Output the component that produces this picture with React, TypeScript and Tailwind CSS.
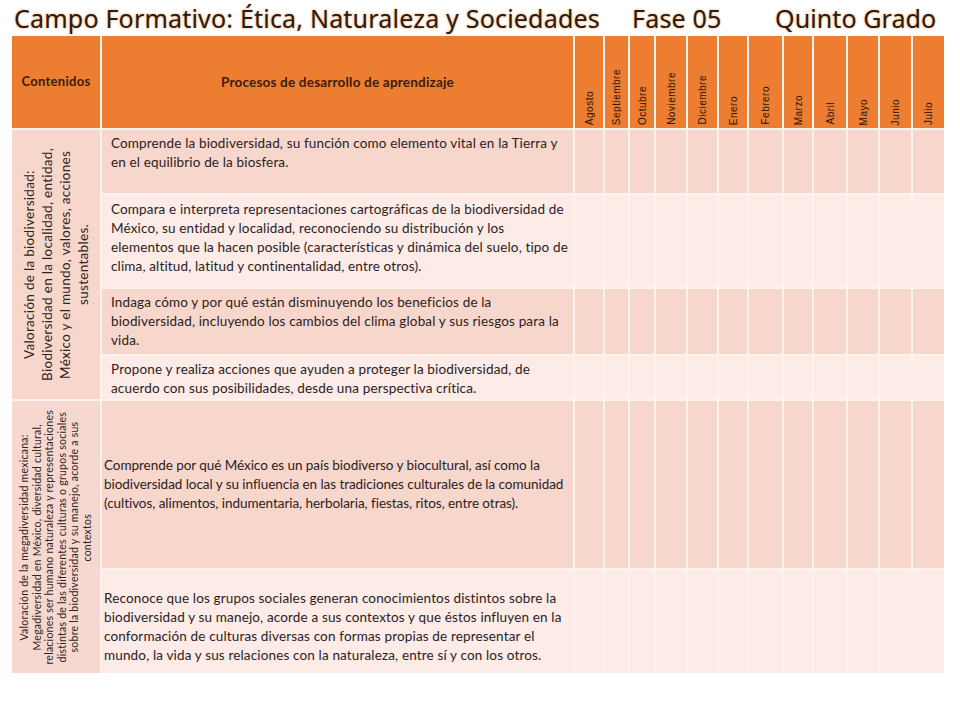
const months = [
  "Agosto",
  "Septiembre",
  "Octubre",
  "Noviembre",
  "Diciembre",
  "Enero",
  "Febrero",
  "Marzo",
  "Abril",
  "Mayo",
  "Junio",
  "Julio",
];

type Row = { lines: string[]; dark: boolean; align: "top" | "center"; pad: string; track: string };

const rows: Row[] = [
  {
    dark: true,
    align: "top",
    pad: "pl-[9px] pt-[4px]",
    track: "tracking-[0.15px]",
    lines: [
      "Comprende la biodiversidad, su función como elemento vital en la Tierra y",
      "en el equilibrio de la biosfera.",
    ],
  },
  {
    dark: false,
    align: "top",
    pad: "pl-[9px] pt-[5px]",
    track: "tracking-[0.15px]",
    lines: [
      "Compara e interpreta representaciones cartográficas de la biodiversidad de",
      "México, su entidad y localidad, reconociendo su distribución y los",
      "elementos que la hacen posible (características y dinámica del suelo, tipo de",
      "clima, altitud, latitud y continentalidad, entre otros).",
    ],
  },
  {
    dark: true,
    align: "top",
    pad: "pl-[9px] pt-[4px]",
    track: "tracking-[0.15px]",
    lines: [
      "Indaga cómo y por qué están disminuyendo los beneficios de la",
      "biodiversidad, incluyendo los cambios del clima global y sus riesgos para la",
      "vida.",
    ],
  },
  {
    dark: false,
    align: "top",
    pad: "pl-[9px] pt-[4px]",
    track: "tracking-[0.15px]",
    lines: [
      "Propone y realiza acciones que ayuden a proteger la biodiversidad, de",
      "acuerdo con sus posibilidades, desde una perspectiva crítica.",
    ],
  },
  {
    dark: true,
    align: "center",
    pad: "pl-[2px]",
    track: "tracking-[-0.05px]",
    lines: [
      "Comprende por qué México es un país biodiverso y biocultural, así como la",
      "biodiversidad local y su influencia en las tradiciones culturales de la comunidad",
      "(cultivos, alimentos, indumentaria, herbolaria, fiestas, ritos, entre otras).",
    ],
  },
  {
    dark: false,
    align: "center",
    pad: "pl-[2px] pt-[10px]",
    track: "tracking-[0.15px]",
    lines: [
      "Reconoce que los grupos sociales generan conocimientos distintos sobre la",
      "biodiversidad y su manejo, acorde a sus contextos y que éstos influyen en la",
      "conformación de culturas diversas con formas propias de representar el",
      "mundo, la vida y sus relaciones con la naturaleza, entre sí y con los otros.",
    ],
  },
];

const App = () => {
  return (
    <div className="w-[960px] h-[720px] bg-white text-[#2b211c]">
      {/* Title */}
      <div className="flex h-[36px] items-center pl-[14px] font-['Noto_Sans',sans-serif] text-[25px] leading-[36px] text-[#2a1c12] [text-shadow:0_0_3px_#f2b07d,0_0_1px_#f2b07d]">
        <span className="w-[618px] whitespace-nowrap tracking-[0.2px]">
          Campo Formativo: Ética, Naturaleza y Sociedades
        </span>
        <span className="w-[143px] whitespace-nowrap tracking-[0.2px]">Fase 05</span>
        <span className="whitespace-nowrap tracking-[0.1px]">Quinto Grado</span>
      </div>

      {/* Table */}
      <div className="ml-[12px] grid w-[932px] gap-[2px] bg-[#fdf3ee] grid-cols-[88px_471px_28px_23px_24px_30px_29px_28px_33px_28px_32px_30px_31px_31px] grid-rows-[92px_63px_92px_65px_43px_167px_103px] font-['Lato',sans-serif]">
        {/* Header */}
        <div className="flex items-center justify-center bg-[#ed7d31] text-[13px] font-bold tracking-[0.3px] text-[#3a1c0c]">
          Contenidos
        </div>
        <div className="flex items-center justify-center bg-[#ed7d31] text-[13.5px] font-bold tracking-[0.2px] text-[#3a1c0c]">
          Procesos de desarrollo de aprendizaje
        </div>
        {months.map((m) => (
          <div key={m} className="flex flex-col items-center justify-end bg-[#ed7d31] pb-[3px]">
            <span className="rotate-180 whitespace-nowrap font-['Liberation_Sans',sans-serif] text-[10px] leading-[11px] tracking-[0.5px] text-[#2a160a] [writing-mode:vertical-rl]">
              {m}
            </span>
          </div>
        ))}

        {/* Section 1 contents */}
        <div className="row-span-4 col-start-1 row-start-2 flex items-center justify-center bg-[#f7d6cc]">
          <p className="rotate-180 whitespace-nowrap text-center text-[13.5px] leading-[18px] tracking-[0.3px] text-[#2e2420] [writing-mode:vertical-rl]">
            Valoración de la biodiversidad:
            <br />
            Biodiversidad en la localidad, entidad,
            <br />
            México y el mundo, valores, acciones
            <br />
            sustentables.
          </p>
        </div>

        {/* Section 2 contents */}
        <div className="row-span-2 col-start-1 row-start-6 flex items-center justify-center bg-[#f7d8d0]">
          <p className="rotate-180 whitespace-nowrap text-center text-[10.5px] leading-[12.6px] tracking-[0.25px] text-[#2e2420] [writing-mode:vertical-rl]">
            Valoración de la megadiversidad mexicana:
            <br />
            Megadiversidad en México, diversidad cultural,
            <br />
            relaciones ser humano naturaleza y representaciones
            <br />
            distintas de las diferentes culturas o grupos sociales
            <br />
            sobre la biodiversidad y su manejo, acorde a sus
            <br />
            contextos
          </p>
        </div>

        {rows.map((r, i) => (
          <Row key={i} row={r} index={i} />
        ))}
      </div>
    </div>
  );
};

const Row = ({ row, index }: { row: Row; index: number }) => {
  const bg = row.dark ? "bg-[#f7d6cc]" : "bg-[#fcebe6]";
  const start = [
    "row-start-2",
    "row-start-3",
    "row-start-4",
    "row-start-5",
    "row-start-6",
    "row-start-7",
  ][index];
  return (
    <>
      <div
        className={`col-start-2 ${start} ${bg} ${row.pad} ${row.track} flex flex-col overflow-hidden ${
          row.align === "center" ? "justify-center" : "justify-start"
        } text-[13.5px] leading-[19px] text-[#2b221e]`}
      >
        {row.lines.map((l, j) => (
          <span key={j} className="whitespace-nowrap">
            {l}
          </span>
        ))}
      </div>
      {months.map((m) => (
        <div key={m} className={`${start} ${bg}`} />
      ))}
    </>
  );
};

export default App;
